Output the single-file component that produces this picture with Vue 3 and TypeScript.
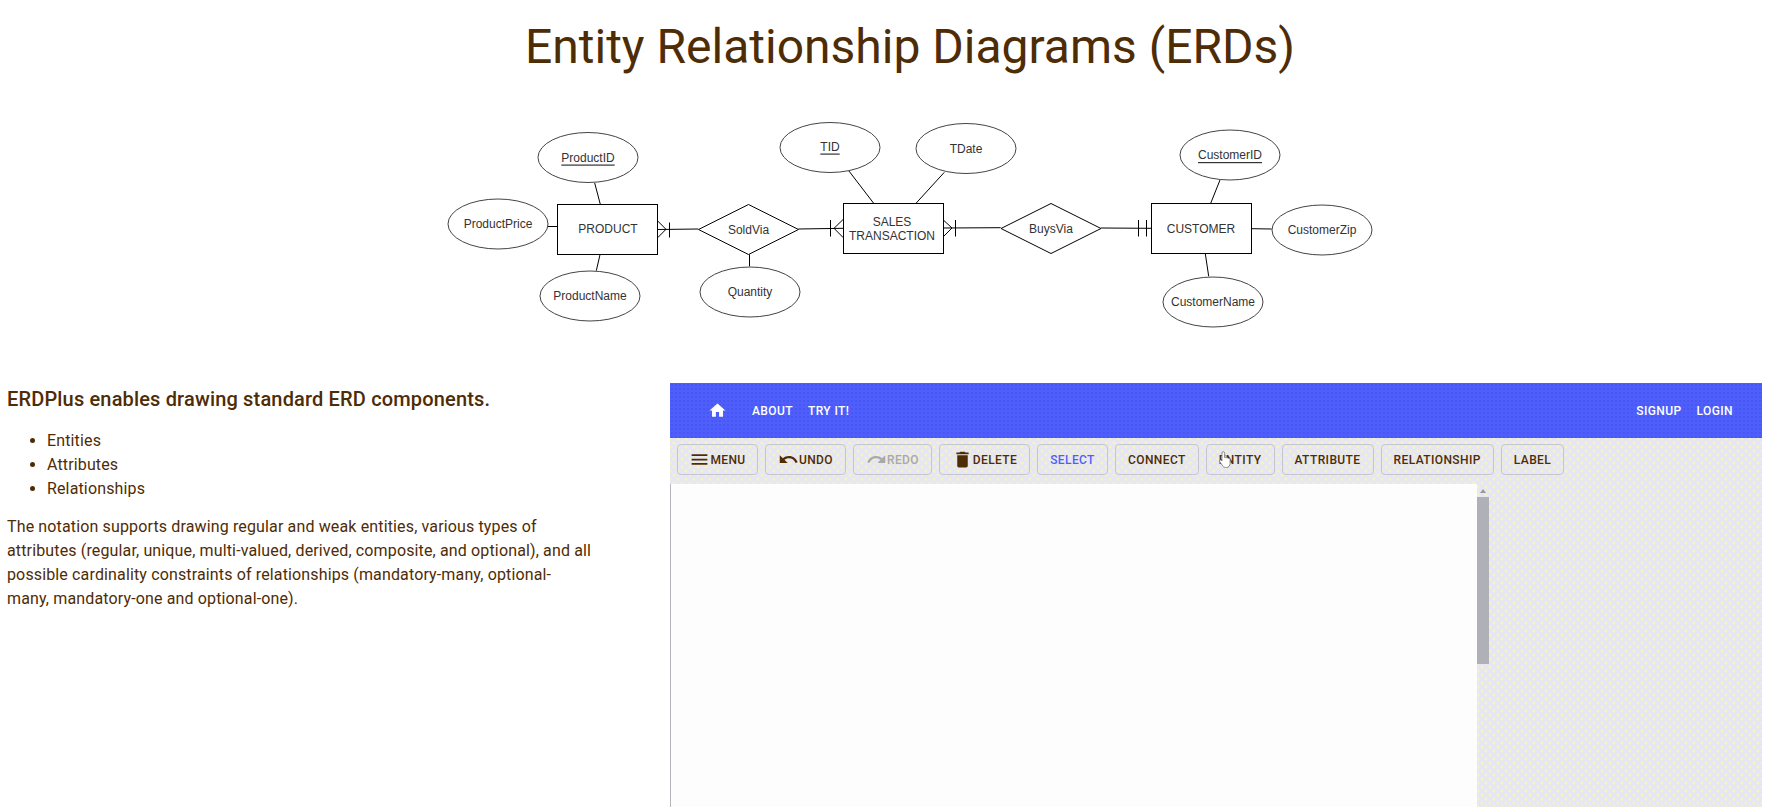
<script setup lang="ts">
interface Ell { cx: number; cy: number; label: string; key?: boolean; ty?: number }
interface Tool { label: string; icon?: string; cls?: string }
const P = {
  home: 'M10 20v-6h4v6h5v-8h3L12 3 2 12h3v8z',
  menu: 'M3 18h18v-2H3v2zm0-5h18v-2H3v2zm0-7v2h18V6H3z',
  undo: 'M12.5 8c-2.65 0-5.05.99-6.9 2.6L2 7v9h9l-3.62-3.62c1.39-1.16 3.16-1.88 5.12-1.88 3.54 0 6.55 2.31 7.6 5.5l2.37-.78C21.08 11.03 17.15 8 12.5 8z',
  redo: 'M18.4 10.6C16.55 8.99 14.15 8 11.5 8c-4.65 0-8.58 3.03-9.96 7.22L3.9 16c1.05-3.19 4.05-5.5 7.6-5.5 1.95 0 3.73.72 5.12 1.88L13 16h9V7l-3.6 3.6z',
  trash: 'M6 19c0 1.1.9 2 2 2h8c1.1 0 2-.9 2-2V7H6v12zM19 4h-3.5l-1-1h-5l-1 1H5v2h14V4z'
}
const ellipses: Ell[] = [
  { cx: 588, cy: 157.5, label: 'ProductID', key: true },
  { cx: 498, cy: 224, label: 'ProductPrice' },
  { cx: 590, cy: 296, label: 'ProductName' },
  { cx: 750, cy: 292, label: 'Quantity' },
  { cx: 830, cy: 147.5, label: 'TID', key: true, ty: 146.5 },
  { cx: 966, cy: 148.5, label: 'TDate' },
  { cx: 1230, cy: 155, label: 'CustomerID', key: true },
  { cx: 1322, cy: 230, label: 'CustomerZip' },
  { cx: 1213, cy: 302, label: 'CustomerName' }
]
const rects = [
  { x: 557.5, y: 204.5 },
  { x: 843.5, y: 203.5 },
  { x: 1151.5, y: 203.5 }
]
const diamonds = [
  { cx: 748.5, cy: 229.5, label: 'SoldVia' },
  { cx: 1051, cy: 228.5, label: 'BuysVia' }
]
const lines: number[][] = [
  [594.7, 183, 600.3, 204.3], [548, 226.5, 557.3, 226.5], [600, 254.7, 596.3, 270.7],
  [657.7, 229.5, 698.3, 229], [798.3, 229, 843.3, 228.3], [749.5, 254.3, 749.5, 266.3],
  [848.7, 170.7, 873.7, 203.3], [944.3, 172.3, 916, 203.3], [943.3, 228, 1000.7, 227.7],
  [1101, 228, 1151.3, 228.3], [1220, 180, 1210.7, 203.3], [1251.7, 228.7, 1271.7, 229],
  [1205.3, 253.7, 1208.7, 276.3], [669.5, 222.5, 669.5, 237.5], [830.5, 220, 830.5, 236.5],
  [955.5, 220, 955.5, 236.5], [1138.5, 220, 1138.5, 236.5], [1146.5, 220, 1146.5, 236.5]
]
const feet = [
  '657.7,221 666,229.3 657.7,237.7',
  '843.3,219.3 834,228.3 843.3,237.7',
  '943.3,220 952,228 943.3,236.7'
]
const tools: Tool[] = [
  { label: 'Menu', icon: P.menu, cls: 'b-menu' },
  { label: 'Undo', icon: P.undo, cls: 'b-undo' },
  { label: 'Redo', icon: P.redo, cls: 'b-redo' },
  { label: 'Delete', icon: P.trash, cls: 'b-delete' },
  { label: 'Select', cls: 'b-select' },
  { label: 'Connect' },
  { label: 'Entity', cls: 'b-entity' },
  { label: 'Attribute' },
  { label: 'Relationship' },
  { label: 'Label' }
]
</script>

<template>
  <div class="page">
    <header class="top">
      <h1 class="title">Entity Relationship Diagrams (ERDs)</h1>
      <svg class="erd" viewBox="440 100 940 240" width="940" height="240" aria-label="ER diagram">
        <g class="shape">
          <line v-for="(l, i) in lines" :key="'l' + i" :x1="l[0]" :y1="l[1]" :x2="l[2]" :y2="l[3]" />
          <polyline v-for="(f, i) in feet" :key="'f' + i" :points="f" />
          <ellipse v-for="e in ellipses" :key="e.label" :cx="e.cx" :cy="e.cy" rx="50" ry="25" class="oval" />
          <rect v-for="r in rects" :key="r.x" :x="r.x" :y="r.y" width="100" height="50" />
          <polygon
            v-for="d in diamonds"
            :key="d.label"
            :points="`${d.cx - 50},${d.cy} ${d.cx},${d.cy - 25} ${d.cx + 50},${d.cy} ${d.cx},${d.cy + 25}`"
          />
        </g>
        <g class="labels">
          <text
            v-for="e in ellipses"
            :key="e.label"
            :x="e.cx"
            :y="e.ty ?? e.cy"
            :text-decoration="e.key ? 'underline' : undefined"
          >{{ e.label }}</text>
          <text x="608" y="229">PRODUCT</text>
          <text x="1201" y="228.5">CUSTOMER</text>
          <text x="892" y="221.5">SALES</text>
          <text x="892" y="235.5">TRANSACTION</text>
          <text v-for="d in diamonds" :key="d.label" :x="d.cx" :y="d.cy">{{ d.label }}</text>
        </g>
      </svg>
    </header>

    <section class="content">
      <div class="copy">
        <h2>ERDPlus enables drawing standard ERD components.</h2>
        <ul>
          <li>Entities</li>
          <li>Attributes</li>
          <li>Relationships</li>
        </ul>
        <p>The notation supports drawing regular and weak entities, various types of attributes (regular, unique, multi-valued, derived, composite, and optional), and all possible cardinality constraints of relationships (mandatory-many, optional-many, mandatory-one and optional-one).</p>
      </div>

      <div class="shot">
        <nav class="nav">
          <svg class="home" viewBox="0 0 24 24" width="19" height="19"><path :d="P.home" /></svg>
          <a class="first">About</a>
          <a>Try it!</a>
          <span class="spacer"></span>
          <a>Signup</a>
          <a>Login</a>
        </nav>
        <div class="tools">
          <button v-for="t in tools" :key="t.label" :class="['tool', t.cls]">
            <svg v-if="t.icon" viewBox="0 0 24 24" width="21" height="21"><path :d="t.icon" /></svg>
            {{ t.label }}
          </button>
          <svg class="hand" viewBox="0 0 16 22" width="14" height="20">
            <path d="M6 1.500c1 0 1.600.7 1.600 1.700v5.200l.8-.3c.8-.2 1.500 0 1.800.5.9-.3 1.600 0 1.900.6.9-.2 1.700.3 1.700 1.300v4.500c0 2.500-1.500 4.500-4 4.500H8.500c-1.500 0-2.500-.7-3.300-2L2 13c-.5-.9-.2-1.700.5-2 .6-.2 1.300 0 1.700.6l.3.5V3.200C4.500 2.200 5 1.500 6 1.500z" />
          </svg>
        </div>
        <div class="work">
          <div class="canvas"></div>
          <div class="scroll">
            <i class="arrow"></i>
            <i class="thumb"></i>
          </div>
        </div>
      </div>
    </section>
  </div>
</template>

<style scoped>
.page {
  width: 1777px;
  height: 807px;
  overflow: hidden;
  background: #fff;
  color: #4e2c06;
  font-family: Roboto, "Liberation Sans", sans-serif;
}
.top {
  padding-left: 43px;
}
.title {
  margin: 0;
  height: 100px;
  padding-top: 15px;
  box-sizing: border-box;
  text-align: center;
  font-size: 48px;
  line-height: 64px;
  font-weight: 400;
}
.erd {
  display: block;
  margin: 0 auto;
}
.shape line,
.shape polyline,
.shape rect,
.shape polygon,
.shape ellipse {
  fill: none;
  stroke: #000;
  stroke-width: 1;
}
.shape rect,
.shape polygon,
.shape ellipse {
  fill: #fff;
}
.shape .oval {
  stroke: #444;
}
.labels text {
  font-family: "Liberation Sans", Arial, sans-serif;
  font-size: 12px;
  fill: #333;
  text-anchor: middle;
  dominant-baseline: central;
}
.content {
  display: flex;
  margin-top: 43px;
  align-items: flex-start;
}
.copy {
  width: 670px;
  flex: none;
  box-sizing: border-box;
  padding: 2px 77px 0 7px;
}
.copy h2 {
  margin: 0 0 16px;
  font-size: 20px;
  line-height: 28px;
  font-weight: 500;
  letter-spacing: 0.16px;
}
.copy ul {
  margin: 0 0 14px;
  padding-left: 40px;
}
.copy li,
.copy p {
  font-size: 16px;
  line-height: 24px;
  letter-spacing: 0.14px;
}
.copy p {
  margin: 0;
}
.shot {
  width: 1092px;
  flex: none;
  height: 424px;
  background-color: #e6e6f6;
  background-image:
    radial-gradient(circle, #f3f3c4 1.3px, transparent 1.9px),
    radial-gradient(circle, #f3f3c4 1.3px, transparent 1.9px);
  background-size: 8px 8px;
  background-position: 0 0, 4px 4px;
}
.nav {
  height: 55px;
  display: flex;
  align-items: center;
  padding: 0 29px 0 38px;
  background-color: #4e5ffe;
  background-image:
    radial-gradient(circle, #3f55e6 0.5px, transparent 1px),
    radial-gradient(circle, #5a56ff 1px, transparent 1.5px);
  background-size: 4px 4px, 8px 8px;
  color: #fff;
  font-size: 12px;
  font-weight: 500;
  letter-spacing: 0.4px;
  text-transform: uppercase;
  gap: 15px;
}
.nav .first {
  margin-left: 10px;
}
.home {
  fill: #fff;
}
.spacer {
  flex: 1;
}
.tools {
  position: relative;
  display: flex;
  gap: 7px;
  height: 46px;
  padding: 6px 0 0 7px;
  box-sizing: border-box;
}
.tool {
  height: 31px;
  padding: 0 12px;
  display: inline-flex;
  align-items: center;
  justify-content: center;
  background: transparent;
  border: 1px solid #c6c6d0;
  border-radius: 4px;
  color: #4e2c06;
  font: 500 12px Roboto, sans-serif;
  letter-spacing: 0.4px;
  text-transform: uppercase;
}
.tool svg {
  fill: #4e2c06;
  flex: none;
}
.b-menu { width: 81px; padding: 0; }
.b-undo { width: 81px; padding: 0; }
.b-redo { width: 79px; padding: 0; color: #a9a9a9; }
.b-redo svg { fill: #a9a9a9; }
.b-delete { width: 91px; padding: 0; }
.b-select { width: 71px; color: #4e5ffe; }
.hand {
  position: absolute;
  left: 548px;
  top: 12px;
  fill: #fff;
  stroke: #777;
  stroke-width: 1;
}
.work {
  display: flex;
  height: 323px;
}
.canvas {
  width: 806px;
  background: #fdfdfd;
  border-left: 1px solid #b5b5bd;
}
.scroll {
  width: 12px;
  display: flex;
  flex-direction: column;
  align-items: center;
  padding-top: 5px;
}
.arrow {
  width: 0;
  height: 0;
  border: 3px solid transparent;
  border-top: 0;
  border-bottom: 4px solid #9a9a9a;
}
.thumb {
  width: 12px;
  height: 167px;
  margin-top: 4px;
  background: #b0b0b8;
}
</style>

<style>
html,
body {
  margin: 0;
  background: #fff;
}
</style>
